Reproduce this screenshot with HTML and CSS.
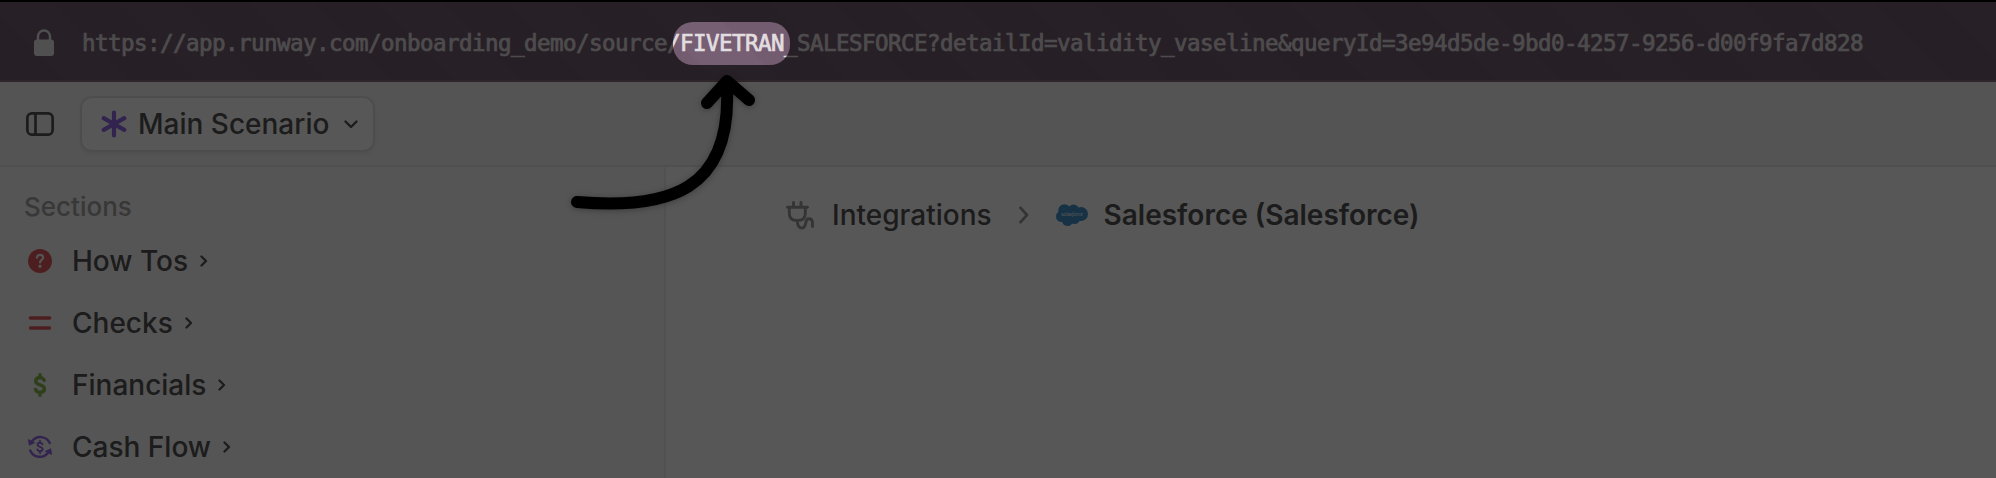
FILE: index.html
```html
<!DOCTYPE html>
<html lang="en">
<head>
<meta charset="utf-8">
<title>Runway – Salesforce</title>
<link rel="stylesheet" href="styles.css">
</head>
<body>
<div class="app">
  <header class="urlbar">
    <svg class="lock" width="20" height="28" viewBox="0 0 20 28"><path d="M4 12V8.500a6 6 0 0 1 12 0V12" fill="none" stroke="currentColor" stroke-width="2.400"/><rect y="11.500" width="20" height="16.500" rx="3" fill="currentColor"/></svg>
    <span class="url">https://app.runway.com/onboarding_demo/source/FIVETRAN_SALESFORCE?detailId=validity_vaseline&amp;queryId=3e94d5de-9bd0-4257-9256-d00f9fa7d828</span>
  </header>
  <div class="toolbar">
    <svg class="panel" width="28" height="24" viewBox="0 0 28 24" fill="none" stroke="currentColor" stroke-width="2.700"><rect x="1.350" y="1.350" width="25.300" height="21.300" rx="4.500"/><path d="M9.500 1v22"/></svg>
    <div class="scenario">
      <svg width="26" height="28" viewBox="0 0 26 28" fill="none" stroke="#9466e8" stroke-width="4.200" stroke-linecap="round"><path d="M13 2.500v23M2.700 8.200l20.600 11.600M2.700 19.800L23.300 8.200"/></svg>
      <span class="scenario-name">Main Scenario</span>
      <svg class="down" width="14" height="9" viewBox="0 0 14 9" fill="none" stroke="currentColor" stroke-width="2.400" stroke-linecap="round" stroke-linejoin="round"><path d="M1.500 1.500L7 7l5.500-5.500"/></svg>
    </div>
  </div>
  <div class="body">
    <nav class="sidebar">
      <div class="heading">Sections</div>
      <div class="item">
        <svg class="icon" viewBox="0 0 24 24"><circle cx="12" cy="12" r="12" fill="#e05a5c"/><path d="M8.900 8.600c.2-1.900 1.500-2.700 3.200-2.700 1.800 0 3.100 1 3.100 2.600 0 2.500-3.200 2.400-3.200 5" fill="none" stroke="#f7f7f7" stroke-width="2.200" stroke-linecap="round"/><circle cx="12" cy="17.300" r="1.600" fill="#f7f7f7"/></svg>
        <span>How Tos</span><svg class="chev" viewBox="0 0 8 12"><path d="M1.500 1.500L6 6l-4.500 4.500"/></svg>
      </div>
      <div class="item">
        <svg class="icon" viewBox="0 0 24 24"><path d="M2.500 7h19M2.500 17h19" stroke="#e05a5c" stroke-width="3.600" stroke-linecap="round"/></svg>
        <span>Checks</span><svg class="chev" viewBox="0 0 8 12"><path d="M1.500 1.500L6 6l-4.500 4.500"/></svg>
      </div>
      <div class="item">
        <svg class="icon" viewBox="0 0 24 24" fill="none" stroke="#86b54b" stroke-width="3.400" stroke-linecap="round"><path d="M12 1.700v3M12 19.300v3M16.200 7.300C15.500 5.500 14 4.600 12 4.600c-2.600 0-4.300 1.400-4.300 3.500 0 4.800 8.700 2.800 8.700 7.700 0 2.200-1.800 3.600-4.400 3.600-2.400 0-4-1.100-4.500-3"/></svg>
        <span>Financials</span><svg class="chev" viewBox="0 0 8 12"><path d="M1.500 1.500L6 6l-4.500 4.500"/></svg>
      </div>
      <div class="item">
        <svg class="icon" viewBox="0 0 24 24" fill="none" stroke="#9466e8" stroke-width="2.400" stroke-linecap="round"><path d="M4 6.300A10.400 10.400 0 0 1 21.800 8M20 17.700A10.400 10.400 0 0 1 2.200 15.500"/><path d="M.8 5.300l.7 4.500 4.300-2zM23.200 18.700l-.7-4.500-4.300 2z" fill="#9466e8" stroke-width="1.400"/><path d="M12 6v1.500M12 16.500V18M14.400 9.200c-.5-1-1.300-1.400-2.400-1.400-1.400 0-2.400.7-2.400 1.900 0 2.700 5 1.700 5 4.400 0 1.400-1.100 2.100-2.600 2.100-1.300 0-2.200-.6-2.600-1.600" stroke-width="2"/></svg>
        <span>Cash Flow</span><svg class="chev" viewBox="0 0 8 12"><path d="M1.500 1.500L6 6l-4.500 4.500"/></svg>
      </div>
    </nav>
    <main class="main">
      <div class="crumbs">
        <svg class="plug" width="28" height="29" viewBox="0 0 28 29" fill="none" stroke="currentColor" stroke-width="2.900" stroke-linecap="round" stroke-linejoin="round"><path d="M7.500 1.500v4M15 1.500v4M1.500 6.300h20M3.300 6.500v6c0 4.500 3 7 8 7s8-2.500 8-7v-6M11.300 19.500c0 4.500 1.500 7.500 4.700 7.500 5.200 0 2.300-9.200 6.700-9.200 3 0 3.800 2.200 3.800 4.200v3.500"/></svg>
        <span class="crumb">Integrations</span>
        <svg class="sep" width="10" height="18" viewBox="0 0 10 18" fill="none" stroke="currentColor" stroke-width="2.700" stroke-linecap="round" stroke-linejoin="round"><path d="M1.500 1.800L8 9l-6.500 7.200"/></svg>
        <svg class="sf" width="32" height="22" viewBox="0 0 32 22"><g fill="#4293c8"><circle cx="8.500" cy="6.500" r="6.300"/><circle cx="17.500" cy="6" r="5.500"/><circle cx="25" cy="10" r="7"/><circle cx="5.500" cy="12.500" r="5.500"/><circle cx="11.500" cy="16.500" r="5.500"/><circle cx="18.500" cy="14.500" r="5.500"/></g><text x="16" y="12.300" class="sf-name">salesforce</text></svg>
        <span class="crumb current">Salesforce (Salesforce)</span>
      </div>
    </main>
  </div>
  <div class="spotlight"></div>
  <svg class="arrow" width="200" height="150" viewBox="0 0 200 150"><path d="M12 72C105 80 166 60 162 -41M142 -27L162 -49L184 -30" transform="translate(0 60)"/></svg>
</div>
</body>
</html>
```

FILE: styles.css
```css
body {
  margin: 0;
  font-family: Inter, "Liberation Sans", sans-serif;
  color: #535353;
}
.app {
  position: relative;
  display: flex;
  flex-direction: column;
  width: 1996px;
  height: 478px;
  overflow: hidden;
  background: #fff;
}
.urlbar {
  box-sizing: border-box;
  flex: none;
  height: 82px;
  display: flex;
  align-items: center;
  padding: 2px 34px 0;
  border-top: 2px solid #000;
  border-bottom: 2px solid #87717f;
  background: repeating-linear-gradient(45deg, #735b70 0 46px, #765f73 46px 92px);
}
.lock {
  color: #edeaed;
}
.url {
  margin-left: 28px;
  padding-top: 2px;
  font: 22.5px/30px "DejaVu Sans Mono", monospace;
  letter-spacing: -0.546px;
  color: #e2dee0;
  -webkit-text-stroke: 0.7px #e2dee0;
  white-space: nowrap;
}
.toolbar {
  box-sizing: border-box;
  flex: none;
  height: 85px;
  display: flex;
  align-items: center;
  padding: 1px 26px 0;
  border-bottom: 2px solid #e8e8e8;
  background: #f5f5f5;
}
.scenario {
  box-sizing: border-box;
  display: flex;
  align-items: center;
  width: 295px;
  height: 56px;
  margin-left: 26px;
  padding-left: 19px;
  border: 2px solid #e2e2e2;
  border-radius: 12px;
  background: #fff;
  box-shadow: 0 2px 3px rgba(0, 0, 0, 0.06);
}
.scenario-name {
  margin-left: 11px;
  font-size: 28px;
  font-weight: 500;
}
.down {
  margin-left: 15px;
}
.body {
  flex: none;
  height: 311px;
  display: flex;
}
.sidebar {
  box-sizing: border-box;
  width: 666px;
  padding: 20px 24px;
  border-right: 2px solid #ececec;
  background: #f8f8f8;
}
.heading {
  height: 43px;
  font-size: 26px;
  line-height: 40px;
  font-weight: 500;
  color: #a4a4a4;
}
.item {
  display: flex;
  align-items: center;
  height: 62px;
  padding-left: 4px;
  font-size: 28px;
  font-weight: 500;
}
.icon {
  width: 24px;
  height: 24px;
  margin-right: 20px;
}
.chev {
  width: 8px;
  height: 12px;
  margin-left: 12px;
  fill: none;
  stroke: currentColor;
  stroke-width: 2.3;
  stroke-linecap: round;
  stroke-linejoin: round;
}
.main {
  flex: 1;
  padding: 27px 0 0 120px;
}
.crumbs {
  display: flex;
  align-items: center;
  height: 42px;
}
.plug,
.sep {
  color: #9a9a9a;
}
.crumb {
  margin-left: 18px;
  font-size: 28px;
  font-weight: 500;
}
.sep {
  margin: 0 27px;
}
.sf-name {
  font: italic 5.5px "Liberation Serif", serif;
  text-anchor: middle;
  fill: #fff;
}
.current {
  margin-left: 16px;
  font-weight: 600;
}
.spotlight {
  position: absolute;
  left: 673px;
  top: 22px;
  width: 117px;
  height: 43px;
  border-radius: 20px;
  box-shadow: 0 0 0 3000px rgba(0, 0, 0, 0.66);
}
.arrow {
  position: absolute;
  left: 565px;
  top: 70px;
  fill: none;
  stroke: #000;
  stroke-width: 12;
  stroke-linecap: round;
  stroke-linejoin: round;
  filter: drop-shadow(0 1px 3px rgba(0, 0, 0, 0.3));
}
```
